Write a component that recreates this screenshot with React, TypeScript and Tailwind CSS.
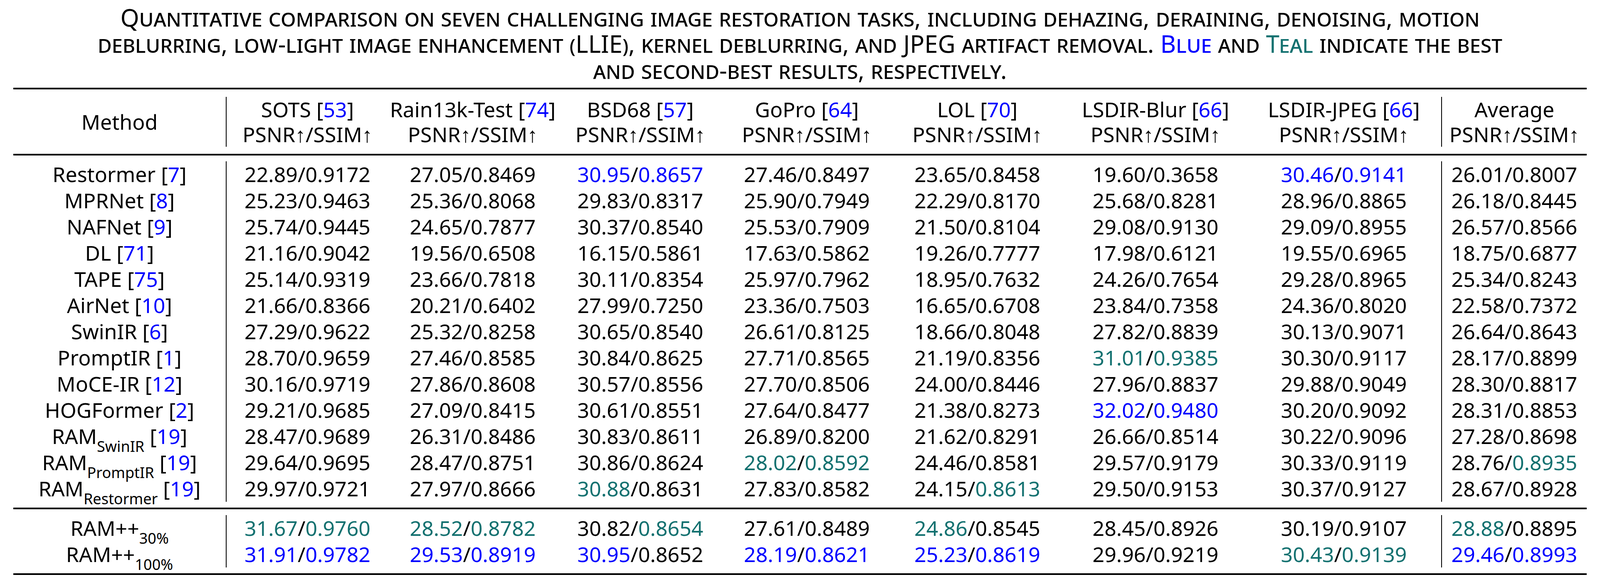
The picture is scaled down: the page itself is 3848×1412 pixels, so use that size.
import React from "react"

const cols = ["w-[513px]", "w-[389px]", "w-[406px]", "w-[400px]", "w-[401px]", "w-[419px]", "w-[438px]", "w-[470px]", "w-[348px]"]

const heads: [string, string][] = [
  ["SOTS", "53"], ["Rain13k-Test", "74"], ["BSD68", "57"], ["GoPro", "64"],
  ["LOL", "70"], ["LSDIR-Blur", "66"], ["LSDIR-JPEG", "66"],
]

type Row = { name: string; sub?: string; cite?: string; vals: string[] }

const main: Row[] = [
  { name: "Restormer", cite: "7", vals: ["22.89/0.9172", "27.05/0.8469", "b30.95/b0.8657", "27.46/0.8497", "23.65/0.8458", "19.60/0.3658", "b30.46/b0.9141", "26.01/0.8007"] },
  { name: "MPRNet", cite: "8", vals: ["25.23/0.9463", "25.36/0.8068", "29.83/0.8317", "25.90/0.7949", "22.29/0.8170", "25.68/0.8281", "28.96/0.8865", "26.18/0.8445"] },
  { name: "NAFNet", cite: "9", vals: ["25.74/0.9445", "24.65/0.7877", "30.37/0.8540", "25.53/0.7909", "21.50/0.8104", "29.08/0.9130", "29.09/0.8955", "26.57/0.8566"] },
  { name: "DL", cite: "71", vals: ["21.16/0.9042", "19.56/0.6508", "16.15/0.5861", "17.63/0.5862", "19.26/0.7777", "17.98/0.6121", "19.55/0.6965", "18.75/0.6877"] },
  { name: "TAPE", cite: "75", vals: ["25.14/0.9319", "23.66/0.7818", "30.11/0.8354", "25.97/0.7962", "18.95/0.7632", "24.26/0.7654", "29.28/0.8965", "25.34/0.8243"] },
  { name: "AirNet", cite: "10", vals: ["21.66/0.8366", "20.21/0.6402", "27.99/0.7250", "23.36/0.7503", "16.65/0.6708", "23.84/0.7358", "24.36/0.8020", "22.58/0.7372"] },
  { name: "SwinIR", cite: "6", vals: ["27.29/0.9622", "25.32/0.8258", "30.65/0.8540", "26.61/0.8125", "18.66/0.8048", "27.82/0.8839", "30.13/0.9071", "26.64/0.8643"] },
  { name: "PromptIR", cite: "1", vals: ["28.70/0.9659", "27.46/0.8585", "30.84/0.8625", "27.71/0.8565", "21.19/0.8356", "t31.01/t0.9385", "30.30/0.9117", "28.17/0.8899"] },
  { name: "MoCE-IR", cite: "12", vals: ["30.16/0.9719", "27.86/0.8608", "30.57/0.8556", "27.70/0.8506", "24.00/0.8446", "27.96/0.8837", "29.88/0.9049", "28.30/0.8817"] },
  { name: "HOGFormer", cite: "2", vals: ["29.21/0.9685", "27.09/0.8415", "30.61/0.8551", "27.64/0.8477", "21.38/0.8273", "b32.02/b0.9480", "30.20/0.9092", "28.31/0.8853"] },
  { name: "RAM", sub: "SwinIR", cite: "19", vals: ["28.47/0.9689", "26.31/0.8486", "30.83/0.8611", "26.89/0.8200", "21.62/0.8291", "26.66/0.8514", "30.22/0.9096", "27.28/0.8698"] },
  { name: "RAM", sub: "PromptIR", cite: "19", vals: ["29.64/0.9695", "28.47/0.8751", "30.86/0.8624", "t28.02/t0.8592", "24.46/0.8581", "29.57/0.9179", "30.33/0.9119", "28.76/t0.8935"] },
  { name: "RAM", sub: "Restormer", cite: "19", vals: ["29.97/0.9721", "27.97/0.8666", "t30.88/0.8631", "27.83/0.8582", "24.15/t0.8613", "29.50/0.9153", "30.37/0.9127", "28.67/0.8928"] },
]

const ours: Row[] = [
  { name: "RAM++", sub: "30%", vals: ["t31.67/t0.9760", "t28.52/t0.8782", "30.82/t0.8654", "27.61/0.8489", "t24.86/0.8545", "28.45/0.8926", "30.19/0.9107", "t28.88/0.8895"] },
  { name: "RAM++", sub: "100%", vals: ["b31.91/b0.9782", "b29.53/b0.8919", "b30.95/0.8652", "b28.19/b0.8621", "b25.23/b0.8619", "29.96/0.9219", "t30.43/t0.9139", "b29.46/b0.8993"] },
]

function Num({ v }: { v: string }) {
  const c = v[0] === "b" ? "text-[#0000ff]" : v[0] === "t" ? "text-[#137170]" : ""
  return <span className={c}>{c ? v.slice(1) : v}</span>
}

function Val({ v }: { v: string }) {
  const [a, b] = v.split("/")
  return <><Num v={a} />/<Num v={b} /></>
}

function Cite({ n }: { n: string }) {
  return <>[<span className="text-[#0000ff]">{n}</span>]</>
}

function Body({ rows }: { rows: Row[] }) {
  return (
    <div>
      {rows.map((r, i) => (
        <div key={i} className="flex h-[63px] items-center">
          <div className={`${cols[0]} h-full flex items-center justify-center border-r-2 border-black`}>
            <span>
              {r.name}
              {r.sub && <sub className="text-[36px] align-[-10px]">{r.sub}</sub>}
              {r.cite && <> <Cite n={r.cite} /></>}
            </span>
          </div>
          {r.vals.map((v, j) => (
            <div key={j} className={`${cols[j + 1]} h-full flex items-center justify-center ${j === 6 ? "border-r-2 border-black" : ""}`}>
              <span><Val v={v} /></span>
            </div>
          ))}
        </div>
      ))}
    </div>
  )
}

export default function App() {
  return (
    <div className="w-[3848px] h-[1412px] bg-white text-black [font-family:'Liberation_Serif',serif] text-[50px]">
      <div className="pt-[10px] text-center text-[58px] leading-[63px] whitespace-nowrap [font-variant:small-caps]">
        Quantitative comparison on seven challenging image restoration tasks, including dehazing, deraining, denoising, motion
        <br />
        deblurring, low-light image enhancement (LLIE), kernel deblurring, and JPEG artifact removal.{" "}
        <span className="text-[#0000ff]">Blue</span> and <span className="text-[#137170]">Teal</span> indicate the best
        <br />
        and second-best results, respectively.
      </div>
      <div className="ml-[32px] w-[3784px] mt-[12px]">
        <div className="h-[4px] bg-black" />
        <div className="flex pt-[18px] pb-[17px] leading-[60px]">
          <div className={`${cols[0]} flex items-center justify-center border-r-2 border-black`}>Method</div>
          {heads.map(([h, c], j) => (
            <div key={h} className={`${cols[j + 1]} text-center ${j === 6 ? "border-r-2 border-black" : ""}`}>
              <div>{h} <Cite n={c} /></div>
              <div>PSNR↑/SSIM↑</div>
            </div>
          ))}
          <div className={`${cols[8]} text-center`}>
            <div>Average</div>
            <div>PSNR↑/SSIM↑</div>
          </div>
        </div>
        <div className="h-[4px] bg-black" />
        <div className="pt-[14px] pb-[14px]"><Body rows={main} /></div>
        <div className="h-[4px] bg-black" />
        <div className="pt-[14px] pb-[14px]"><Body rows={ours} /></div>
        <div className="h-[4px] bg-black" />
      </div>
    </div>
  )
}
